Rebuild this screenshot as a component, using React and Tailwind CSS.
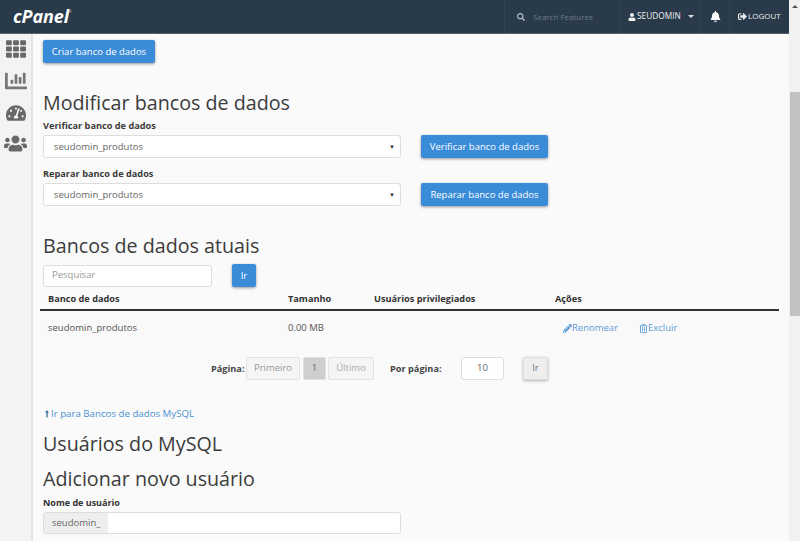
import React from 'react'
import { FaTh, FaChartBar, FaTachometerAlt, FaUsers, FaUser, FaBell, FaSignOutAlt, FaSearch, FaPencilAlt, FaRegTrashAlt, FaLongArrowAltUp } from 'react-icons/fa'

function BlueButton({ children, className = '' }) {
  return (
    <button className={`block h-[23px] pt-[1px] rounded-[2px] bg-[#3a8bd8] text-white text-[9.5px] shadow-[0_1px_3px_rgba(0,0,0,0.4)] ${className}`}>
      {children}
    </button>
  )
}

function SelectRow({ label, value, action }) {
  return (
    <div>
      <div className="text-[9.2px] font-bold text-[#3a3a3a] leading-[14px]">{label}</div>
      <div className="flex items-center gap-5 mt-[2px]">
        <div className="w-[358px] h-[23px] pt-[1px] flex items-center justify-between bg-white border border-[#ddd] rounded-[3px] pl-[10px] pr-[5px] text-[9.5px] text-[#666]">
          <span>{value}</span>
          <span className="text-[6px] text-[#333]">▼</span>
        </div>
        <BlueButton className="w-[127px]">{action}</BlueButton>
      </div>
    </div>
  )
}

function PageBox({ children, className = '' }) {
  return (
    <div className={`h-[23px] flex items-center justify-center border border-[#e2e2e2] rounded-[2px] text-[9.5px] ${className}`}>
      {children}
    </div>
  )
}

export default function App() {
  return (
    <div className="h-[541px] w-[800px] overflow-hidden flex font-['Open_Sans',sans-serif] bg-[#fafafa]">
      <div className="w-[789px] flex flex-col">
        <header className="h-[34px] shrink-0 bg-[#293a4a] border-b border-[#55626f] flex items-center text-white">
          <span className="ml-[13px] text-[18px] font-bold italic tracking-[-0.1px]">cPanel</span>
          <span className="self-start mt-[10px] text-[3px] text-[#ddd]">®</span>
          <div className="ml-auto flex h-full items-center">
            <div className="w-[115px] h-full flex items-center border-l border-[#324454] pl-[12px]">
              <FaSearch className="text-[#b6bdc4] text-[8px]" />
              <span className="ml-[8px] text-[8px] text-[#6d7a86]">Search Features</span>
            </div>
            <div className="w-[82px] h-full flex items-center border-x border-[#324454] pl-[8px]">
              <FaUser className="text-[8px] text-[#eee]" />
              <span className="ml-[1px] text-[8.3px] text-[#eee]">SEUDOMIN</span>
              <span className="ml-[7px] w-0 h-0 border-x-[3px] border-x-transparent border-t-[3px] border-t-[#ddd]" />
            </div>
            <div className="w-[29px] h-full flex items-center justify-center border-r border-[#324454]">
              <FaBell className="text-[11px] text-white" />
            </div>
            <div className="w-[59px] h-full flex items-center pl-[8px] pb-[1px]">
              <FaSignOutAlt className="text-[9px] text-[#eee]" />
              <span className="ml-[1px] text-[8px] text-[#eee]">LOGOUT</span>
            </div>
          </div>
        </header>
        <div className="flex flex-1 min-h-0">
          <aside className="w-[33px] shrink-0 bg-[#f3f3f3] border-r-[2px] border-[#e3e3e3] flex flex-col items-center pt-[5px] text-[#686868]">
            <FaTh className="text-[20px] h-[20px]" />
            <FaChartBar className="text-[22px] mt-[11px] text-[#777]" />
            <FaTachometerAlt className="text-[20px] mt-[11px]" />
            <FaUsers className="text-[23px] mt-[9px]" />
          </aside>
          <main className="flex-1 pl-[10px] pr-[10px] pt-[6px] text-[#333]">
            <BlueButton className="w-[112px]">Criar banco de dados</BlueButton>
            <h2 className="mt-[26px] text-[19.7px] leading-[28px] text-[#3c3c3c]">Modificar bancos de dados</h2>
            <div className="mt-[2px]">
              <SelectRow label="Verificar banco de dados" value="seudomin_produtos" action="Verificar banco de dados" />
            </div>
            <div className="mt-[9px]">
              <SelectRow label="Reparar banco de dados" value="seudomin_produtos" action="Reparar banco de dados" />
            </div>
            <h2 className="mt-[26px] text-[19.7px] leading-[28px] text-[#3c3c3c]">Bancos de dados atuais</h2>
            <div className="flex items-center gap-5 mt-[4px]">
              <div className="w-[169px] h-[22px] flex items-center bg-white border border-[#ddd] rounded-[3px] pl-[8px] text-[9.5px] text-[#999]">Pesquisar</div>
              <BlueButton className="w-[24px]">Ir</BlueButton>
            </div>
            <div className="-ml-[3px] mt-[1px] w-[739px]">
              <div className="h-[23px] flex items-center border-b-[2px] border-[#333] text-[9.2px] font-bold pl-[8px]">
                <span className="w-[240px]">Banco de dados</span>
                <span className="w-[86px]">Tamanho</span>
                <span className="w-[181px]">Usuários privilegiados</span>
                <span>Ações</span>
              </div>
              <div className="h-[34px] flex items-center text-[9.5px] text-[#555] pl-[8px] bg-[#f9f9f9]">
                <span className="w-[240px]">seudomin_produtos</span>
                <span className="w-[86px]">0.00 MB</span>
                <span className="w-[189px]" />
                <span className="flex items-center text-[#5b9bd5]">
                  <FaPencilAlt className="text-[9px]" />
                  <span>Renomear</span>
                </span>
                <span className="flex items-center text-[#5b9bd5] ml-[21px]">
                  <FaRegTrashAlt className="text-[9px]" />
                  <span>Excluir</span>
                </span>
              </div>
            </div>
            <div className="flex items-center mt-[12px] pl-[168px] text-[9.5px]">
              <span className="font-bold text-[9.2px] text-[#444] w-[35px]">Página:</span>
              <PageBox className="w-[54px] text-[#999] bg-[#f5f5f5]">Primeiro</PageBox>
              <PageBox className="w-[23px] ml-[3px] text-[#666] bg-[#cfcfcf] border-[#c4c4c4]">1</PageBox>
              <PageBox className="w-[46px] ml-[2px] text-[#aaa] bg-[#f5f5f5]">Último</PageBox>
              <span className="ml-[16px] w-[71px] font-bold text-[9.2px] text-[#444]">Por página:</span>
              <div className="w-[43px] h-[23px] flex items-center justify-center bg-white border border-[#ddd] rounded-[3px] text-[#666]">10</div>
              <button className="ml-[19px] w-[25px] h-[23px] rounded-[2px] bg-[#eee] border border-[#ddd] text-[#777] shadow-[0_1px_3px_rgba(0,0,0,0.3)]">Ir</button>
            </div>
            <div className="flex items-center mt-[27px] text-[9.7px] leading-[14px] text-[#4a90d0]">
              <FaLongArrowAltUp className="text-[8px] text-[#2d6a8f] w-[8px]" />
              <span>Ir para Bancos de dados MySQL</span>
            </div>
            <h2 className="mt-[9px] text-[19.7px] leading-[28px] text-[#3c3c3c]">Usuários do MySQL</h2>
            <h2 className="mt-[7px] text-[19.7px] leading-[28px] text-[#3c3c3c]">Adicionar novo usuário</h2>
            <div className="mt-[3px] text-[9px] font-bold leading-[14px]">Nome de usuário</div>
            <div className="mt-[2px] w-[358px] h-[22px] flex border border-[#ddd] rounded-[3px] bg-white">
              <div className="w-[64px] flex items-center bg-[#eee] pl-[8px] text-[9.5px] text-[#666]">seudomin_</div>
            </div>
          </main>
        </div>
      </div>
      <div className="w-[11px] shrink-0 bg-[#f1f1f1] flex flex-col items-center">
        <span className="mt-[5px] w-0 h-0 border-x-[3px] border-x-transparent border-b-[3px] border-b-[#555] mb-[84px]" />
        <div className="w-[10px] h-[224px] bg-[#c1c1c1]" />
      </div>
    </div>
  )
}
